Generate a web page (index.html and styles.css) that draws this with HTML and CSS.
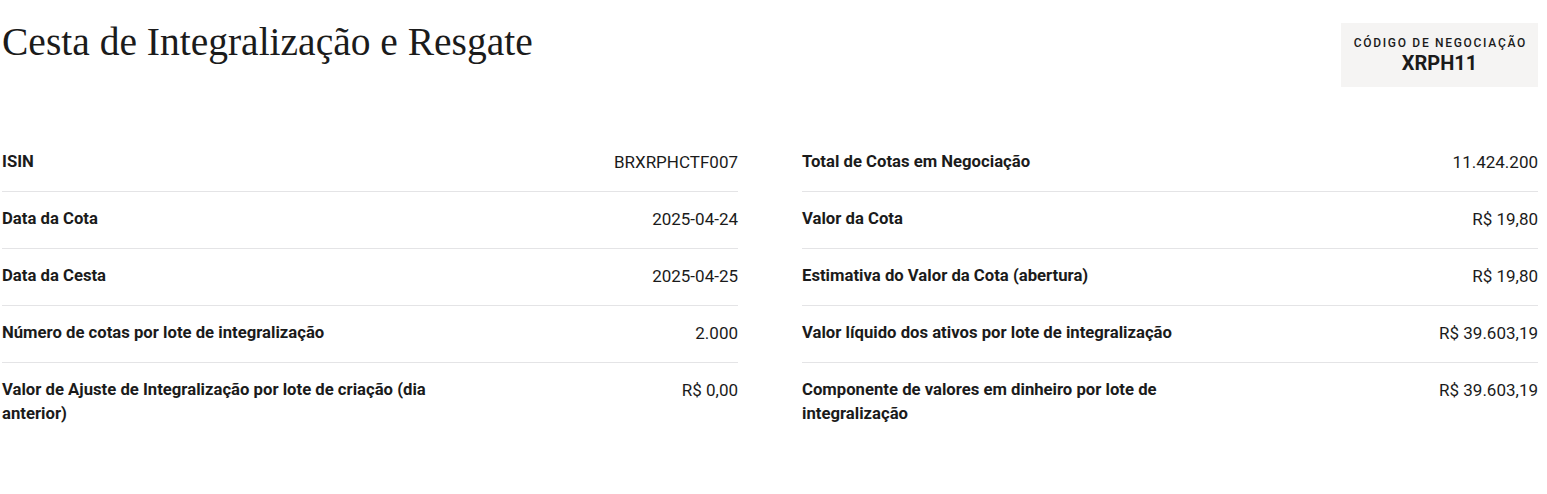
FILE: index.html
```html
<!DOCTYPE html>
<html lang="pt-BR">
<head>
<meta charset="utf-8">
<title>Cesta de Integralização e Resgate</title>
<link rel="stylesheet" href="styles.css">
</head>
<body>
<main class="page">
  <header class="header">
    <h1 class="title">Cesta de Integralização e Resgate</h1>
    <div class="badge">
      <div class="badge-label">Código de Negociação</div>
      <div class="badge-value">XRPH11</div>
    </div>
  </header>
  <section class="grid">
    <dl class="table">
      <div class="row"><dt>ISIN</dt><dd>BRXRPHCTF007</dd></div>
      <div class="row"><dt>Data da Cota</dt><dd>2025-04-24</dd></div>
      <div class="row"><dt>Data da Cesta</dt><dd>2025-04-25</dd></div>
      <div class="row"><dt>Número de cotas por lote de integralização</dt><dd>2.000</dd></div>
      <div class="row"><dt>Valor de Ajuste de Integralização por lote de criação (dia anterior)</dt><dd>R$ 0,00</dd></div>
    </dl>
    <dl class="table">
      <div class="row"><dt>Total de Cotas em Negociação</dt><dd>11.424.200</dd></div>
      <div class="row"><dt>Valor da Cota</dt><dd>R$ 19,80</dd></div>
      <div class="row"><dt>Estimativa do Valor da Cota (abertura)</dt><dd>R$ 19,80</dd></div>
      <div class="row"><dt>Valor líquido dos ativos por lote de integralização</dt><dd>R$ 39.603,19</dd></div>
      <div class="row"><dt>Componente de valores em dinheiro por lote de integralização</dt><dd>R$ 39.603,19</dd></div>
    </dl>
  </section>
</main>
</body>
</html>
```

FILE: styles.css
```css
* { box-sizing: border-box; }
html, body { margin: 0; padding: 0; background: #ffffff; }
body {
  font-family: Roboto, "Liberation Sans", sans-serif;
  color: #1b1b1b;
}
.page {
  width: 1536px;
  margin-left: 2px;
  padding-top: 23px;
}
.header {
  display: flex;
  justify-content: space-between;
  align-items: flex-start;
}
.title {
  margin: 0;
  font-family: "Liberation Serif", serif;
  font-weight: 400;
  font-size: 39.5px;
  line-height: 38px;
  color: #1b1b1b;
}
.badge {
  background: #f5f4f3;
  padding: 12px 0;
  text-align: center;
  width: 197px;
}
.badge-label {
  font-size: 12px;
  line-height: 16px;
  letter-spacing: 1.7px;
  text-transform: uppercase;
  font-weight: 500;
  white-space: nowrap;
  margin-right: -1.7px;
}
.badge-value {
  font-size: 20px;
  line-height: 24px;
  font-weight: 700;
}
.grid {
  display: grid;
  grid-template-columns: 736px 736px;
  column-gap: 64px;
  margin-top: 48px;
}
.table { margin: 0; }
.row {
  display: flex;
  justify-content: space-between;
  align-items: flex-start;
  padding: 15px 0 17px;
  border-bottom: 1px solid #e4e4e6;
  font-size: 17px;
  line-height: 24px;
}
.row:last-child { border-bottom: none; }
.row dt {
  font-weight: 700;
  font-size: 16.7px;
  max-width: 441px;
}
.row dd {
  margin: 0;
  text-align: right;
  font-weight: 400;
}
```
